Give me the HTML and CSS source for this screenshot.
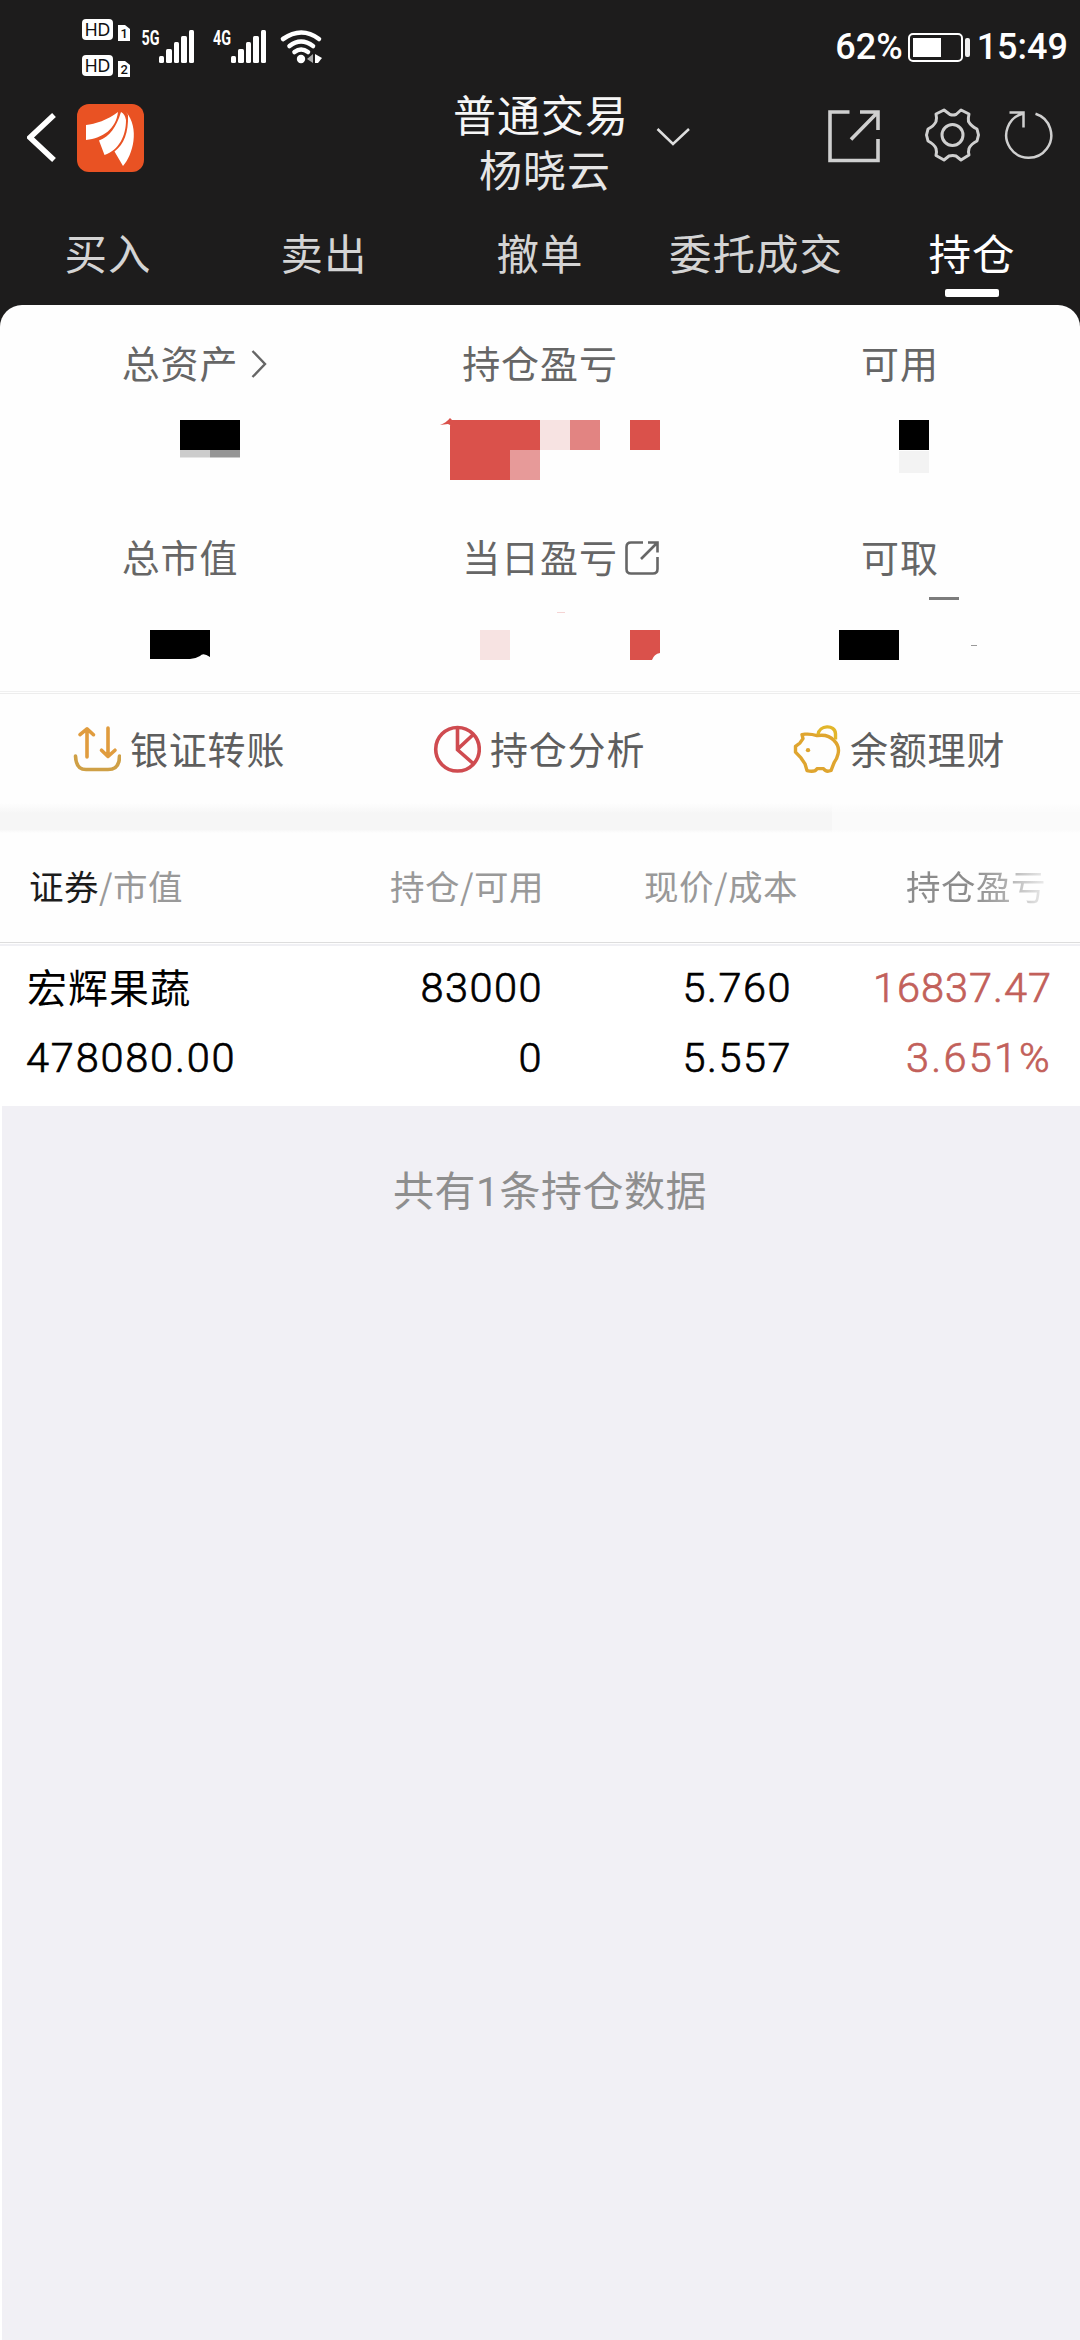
FILE: index.html
```html
<!DOCTYPE html>
<html lang="zh-CN">
<head>
<meta charset="utf-8">
<title>持仓</title>
<link rel="stylesheet" href="styles.css">
</head>
<body>
<header class="top">
  <div class="status">
    <svg class="status-left" width="250" height="66" viewBox="80 15 250 66">
      <g fill="#fff">
        <rect x="82" y="19" width="31" height="21" rx="4"/>
        <rect x="82" y="55" width="31" height="21" rx="4"/>
        <path d="M118 25h7l5 4v12h-12z"/>
        <path d="M118 61h7l5 4v12h-12z"/>
      </g>
      <g class="hd"><text x="84.5" y="36" textLength="26">HD</text><text x="84.5" y="72" textLength="26">HD</text></g>
      <g class="sim"><text x="120.5" y="38">1</text><text x="120.5" y="74">2</text></g>
      <g class="net"><text x="141.500" y="45" textLength="18" lengthAdjust="spacingAndGlyphs">5G</text><text x="213" y="45" textLength="18" lengthAdjust="spacingAndGlyphs">4G</text></g>
      <g id="bars" fill="#fff">
        <rect x="159" y="56" width="5" height="7" rx="1.500"/><rect x="166" y="49" width="6" height="14" rx="1.500"/><rect x="174" y="42" width="5" height="21" rx="1.500"/><rect x="181" y="36" width="6" height="27" rx="1.500"/><rect x="189" y="30" width="5" height="33" rx="1.500"/>
      </g>
      <use href="#bars" x="72"/>
      <g fill="none" stroke="#fff" stroke-width="4.600" stroke-linecap="round">
        <path d="M283 39q18.500-13 36 0M289.500 46q11.500-9 23.500 0M294.500 52q6.500-5 13.500 0"/>
      </g>
      <circle cx="301" cy="59" r="4.200" fill="#fff"/>
      <path d="M307 59l6-5v9z" fill="#aaa"/><path d="M315 54l7 4-4 5h-3z" fill="#fff"/>
    </svg>
    <div class="status-right">
      <span>62%</span>
      <svg width="64" height="31" viewBox="908 32 64 31">
        <rect x="909" y="34" width="53" height="27" rx="4" fill="none" stroke="#fff" stroke-width="2"/>
        <rect x="913" y="38" width="28" height="19" fill="#fff"/>
        <rect x="965" y="38" width="5" height="19" rx="2" fill="#eee"/>
      </svg>
      <span>15:49</span>
    </div>
  </div>

  <nav class="nav">
    <div class="nav-left">
      <svg width="30" height="54" viewBox="27 110 30 54"><path d="M54 115L30 137.500L54 160" fill="none" stroke="#fff" stroke-width="5.500"/></svg>
      <svg class="logo" width="67" height="68" viewBox="77 104 67 68">
        <rect x="77" y="104" width="67" height="68" rx="12" fill="#e95223"/>
        <path fill="#fff" d="M118 112C108 120 95 124 86 125V140C103 138 116 129 118 112Z"/>
        <path fill="#fff" d="M121 112C116 128 110 136 99 140.500L104.500 155C119 150 126 136 126 120Q125 114 121 112Z"/>
        <path fill="#fff" d="M128 115C128.500 133 124 144 114.500 151.500L123 166C133 155 140 128 126 112Z"/>
      </svg>
    </div>
    <div class="title">
      <h1>普通交易</h1>
      <p>杨晓云</p>
    </div>
    <svg class="drop" width="34" height="20" viewBox="655 127 34 20"><path d="M656.500 129L672 144L688 129" fill="none" stroke="#ddd" stroke-width="2.500"/></svg>
    <svg class="tools" width="226" height="56" viewBox="827 107 226 56" fill="none" stroke="#cfcfcf">
      <path stroke-width="3.600" d="M848.500 112H829V160.500H877V139M859 112H877V130M876 113L850 139.500"/>
      <path stroke-width="3" stroke-linejoin="round" d="M943 110L949 114.500Q952 115.500 955 114.500L960 110L968 114Q967 118 967.500 121.500Q970 126 976 129L977.500 135L976 141Q970 144 968 148.500Q967 152 968 155L960 160L955 156Q952 155 948 156L943 160L935 155.500Q936 152 935 148.500Q933 144 927 141L925.500 135L927 129Q933 126 935 121.500Q936 118 935 114Z"/>
      <circle cx="951.500" cy="135" r="10.500" stroke-width="3"/>
      <path stroke-width="2.500" d="M1034.500 113.800A22.500 22.500 0 1 1 1022 113.500M1008.500 112.500H1022.500V127.500"/>
    </svg>
  </nav>

  <div class="tabs">
    <span>买入</span><span>卖出</span><span>撤单</span><span>委托成交</span><span class="active">持仓</span>
  </div>
</header>

<main>
  <section class="summary">
    <div class="stat">
      <div class="label">总资产<svg class="after chev" width="16" height="30" viewBox="0 0 16 30"><path d="M1.500 2L14 15L1.500 28" fill="none" stroke="#666" stroke-width="2.400"/></svg></div>
      <svg class="mask" width="360" height="90" viewBox="0 405 360 90"><rect x="180" y="420" width="60" height="30"/><rect x="180" y="450" width="30" height="7.500" fill="#ccc"/><rect x="210" y="450" width="30" height="7.500" fill="#959595"/></svg>
    </div>
    <div class="stat">
      <div class="label">持仓盈亏</div>
      <svg class="mask" width="360" height="90" viewBox="360 405 360 90">
        <path fill="#da514b" d="M450 420H540V450H510V480H450ZM630 420h30v30h-30zM440 425Q446 423 450 418L452 420V426L448 424Z"/>
        <rect x="510" y="450" width="30" height="30" fill="#e79a99"/><rect x="540" y="420" width="30" height="30" fill="#f7e3e2"/><rect x="570" y="420" width="30" height="30" fill="#e28482"/>
      </svg>
    </div>
    <div class="stat">
      <div class="label">可用</div>
      <svg class="mask" width="360" height="90" viewBox="720 405 360 90"><rect x="899" y="420" width="30" height="30"/><rect x="899" y="451" width="30" height="22" fill="#f3f3f3"/></svg>
    </div>
    <div class="stat">
      <div class="label">总市值</div>
      <svg class="mask" width="360" height="90" viewBox="0 599 360 90"><path d="M150 630H210V657Q203 652 200 656Q195 659 190 659H150Z"/></svg>
    </div>
    <div class="stat">
      <div class="label">当日盈亏<svg class="after" width="34" height="34" viewBox="624 541 34 34" fill="none" stroke="#666" stroke-width="2.600"><path d="M642 542.500H630Q625.500 542.500 625.500 547V569Q625.500 573.500 630 573.500H652Q656.500 573.500 656.500 569V557M647 542.500H656.500V552.500M656 543L640 559"/></svg></div>
      <svg class="mask" width="360" height="90" viewBox="360 599 360 90"><rect x="480" y="630" width="30" height="30" fill="#f7e3e2"/><path fill="#da514b" d="M630 630H660V653Q654 654 652 660H630Z"/><rect x="557" y="612" width="8" height="1" fill="#f5d4d4"/></svg>
    </div>
    <div class="stat">
      <div class="label">可取</div>
      <svg class="mask cash" width="360" height="94" viewBox="720 595 360 94"><rect x="929" y="597" width="30" height="3" fill="#7c7c7c"/><rect x="839" y="630" width="60" height="30"/><rect x="971" y="645" width="6" height="1" fill="#999"/></svg>
    </div>
  </section>

  <section class="actions">
    <div class="action">
      <svg width="48" height="48.500" preserveAspectRatio="none" viewBox="73 726 48 50" fill="none" stroke="#e09c3e" stroke-width="3.600" stroke-linecap="round" stroke-linejoin="round"><path d="M87 759V730M80 736L87 730L93.500 736M108 729V758M101.500 752L108 758.500L115 752"/><path stroke="#cfa046" d="M75.500 758Q76 772 86 772H108Q119.500 772 119.500 758"/></svg>
      <span>银证转账</span>
    </div>
    <div class="action">
      <svg width="48" height="48.500" preserveAspectRatio="none" viewBox="433 726 48 50" fill="none" stroke="#cf4b50" stroke-width="3.600"><ellipse cx="457.500" cy="751" rx="21.800" ry="22.500"/><path d="M457.500 728V751.500L473.500 766M457.500 751L473 736"/></svg>
      <span>持仓分析</span>
    </div>
    <div class="action">
      <svg width="48" height="48.500" preserveAspectRatio="none" viewBox="793 726 48 50" fill="none" stroke="#dfa52f" stroke-width="3.400" stroke-linejoin="round"><path d="M817 737Q828 735 834 742Q840 748 838 756Q837 761 834 765L831 773Q826 775 823.500 771H817Q815 775 807 773L805 766L801 760L795.500 754V748L800 744.500L803 740L802 736L805 735.500Q811 735 817 737Z"/><path stroke="#e2b62b" d="M818 736C819 726 835 725 835.500 735V741"/><circle cx="808" cy="752" r="2.200" fill="#dfa52f" stroke="none"/></svg>
      <span>余额理财</span>
    </div>
  </section>

  <div class="band"></div>

  <section class="thead">
    <span><b>证券</b>/市值</span>
    <span>持仓/可用</span>
    <span>现价/成本</span>
    <span class="fade">持仓盈亏</span>
  </section>

  <section class="row">
    <div><span class="name">宏辉果蔬</span><span class="value">478080.00</span></div>
    <div><span>83000</span><span>0</span></div>
    <div><span>5.760</span><span>5.557</span></div>
    <div class="up"><span class="gain">16837.47</span><span class="rate">3.651%</span></div>
  </section>
</main>
<footer class="rest">共有<span>1</span>条持仓数据</footer>
</body>
</html>
```
FILE: styles.css
```css
* { box-sizing: border-box; margin: 0; padding: 0; }
body {
  width: 1080px;
  height: 2340px;
  display: flex;
  flex-direction: column;
  background: #fff;
  font-family: "Noto Sans CJK SC", sans-serif;
  overflow: hidden;
}
svg { display: block; flex: none; }

.top { height: 327px; background: #1d1c1c; flex: none; }
.status { height: 90px; display: flex; justify-content: space-between; padding: 15px 12px 0 80px; }
.status-right { display: flex; height: 33px; margin-top: 16px; align-items: center; font: 500 36px/33px Roboto, sans-serif; color: #fff; gap: 5px; }
.hd { font: 400 18px "Noto Sans", sans-serif; fill: #111; }
.sim { font: 500 13px Roboto, sans-serif; fill: #111; }
.net { font: 700 20px Roboto, sans-serif; fill: #fff; }

.nav { height: 118px; display: flex; padding-left: 27px; }
.nav-left { display: flex; width: 426px; padding-top: 14px; }
.nav-left svg:first-child { margin-top: 6px; }
.logo { margin-left: 20px; }
.title { width: 202px; color: #f6f6f6; }
.title h1, .title p { font-size: 43px; font-weight: 400; line-height: 55px; letter-spacing: 1px; white-space: nowrap; }
.title h1 { margin-top: -4px; }
.title p { padding-left: 26px; color: #e6e6e6; }
.drop { margin: 37px 0 0 1px; }
.tools { margin: 17px 0 0 138px; }

.tabs { display: flex; height: 97px; }
.tabs span { width: 216px; height: 97px; text-align: center; font-size: 42.500px; letter-spacing: 1px; line-height: 88px; color: #d4d4d4; }
.tabs .active { color: #fff; display: flex; flex-direction: column; align-items: center; }
.tabs .active::after { content: ""; width: 54px; height: 8px; border-radius: 2px; background: #fff; margin-top: -7px; }

main { margin-top: -22px; border-radius: 22px 22px 0 0; background: #fefefe; flex: none; }
.summary { display: grid; grid-template-columns: repeat(3, 360px); grid-auto-rows: 194px; height: 386px; padding-top: 35px; }
.label { position: relative; width: max-content; margin: 0 auto; font-size: 38px; letter-spacing: 0.9px; line-height: 44px; height: 65px; color: #666; }
.after { position: absolute; left: calc(100% + 7px); top: 7px; }
.chev { left: calc(100% + 13px); top: 9px; }
.cash { margin-top: -4px; }

.actions { display: grid; grid-template-columns: repeat(3, 360px); grid-template-rows: 42px 50px; height: 112px; border-top: 1px solid #f0f0f0; }
.actions::before { content: ""; grid-column: 1 / -1; height: 1px; margin-top: 1px; background: #ededed; }
.action { display: flex; align-items: center; padding-left: 73px; gap: 9px; height: 50px; margin-top: -10px; }
.action span { font-size: 38px; letter-spacing: 0.8px; color: #5e5e5e; line-height: 48px; padding-bottom: 2px; }

.band { height: 30px; background: linear-gradient(to bottom, #fefefe, transparent 35%, transparent 88%, #fefefe), linear-gradient(to right, #f6f6f6 832px, #fafafa 832px); }

.thead { display: flex; height: 110px; padding-left: 29px; font-size: 34.500px; letter-spacing: 0.5px; line-height: 104px; color: #999; border-bottom: 1px solid #ddd; white-space: nowrap; }
.thead span { width: 361px; }
.thead span + span { width: 254px; }
.thead .fade { width: 144px; margin-left: 8px; }
.thead b { font-weight: 400; color: #1c1c1c; }
.fade { background: linear-gradient(to right, #8c8c8c 45%, #aaa 67%, #eee 98%); -webkit-background-clip: text; background-clip: text; color: transparent; }

.row { display: flex; height: 162px; border-top: 2px solid #f0f0f4; margin-top: 1px; padding: 7px 28px 0 26px; font: 300 41.500px/70px Roboto, sans-serif; letter-spacing: 1.500px; color: #000; background: #fff; -webkit-text-stroke: 0.7px; }
.row div { display: flex; flex-direction: column; text-align: right; width: 250px; }
.row div:first-child { width: 269px; text-align: left; }
.row div:last-child { width: 261px; color: #c2605a; }
.row .name { font: 400 40px/67px "Noto Sans CJK SC", sans-serif; letter-spacing: 1px; margin-bottom: 3px; padding-left: 1px; -webkit-text-stroke: 0; }
.row .value { letter-spacing: 1.800px; }
.row .gain { letter-spacing: 1px; }
.row .rate { letter-spacing: 2.200px; }

.rest { flex: 1; margin-left: 2px; padding-top: 51px; background: #f1f0f5; color: #8e8e8e; text-align: center; font-size: 41px; line-height: 62px; letter-spacing: 0.5px; padding-left: 18px; }
.rest span { font-family: Roboto, sans-serif; }
```
